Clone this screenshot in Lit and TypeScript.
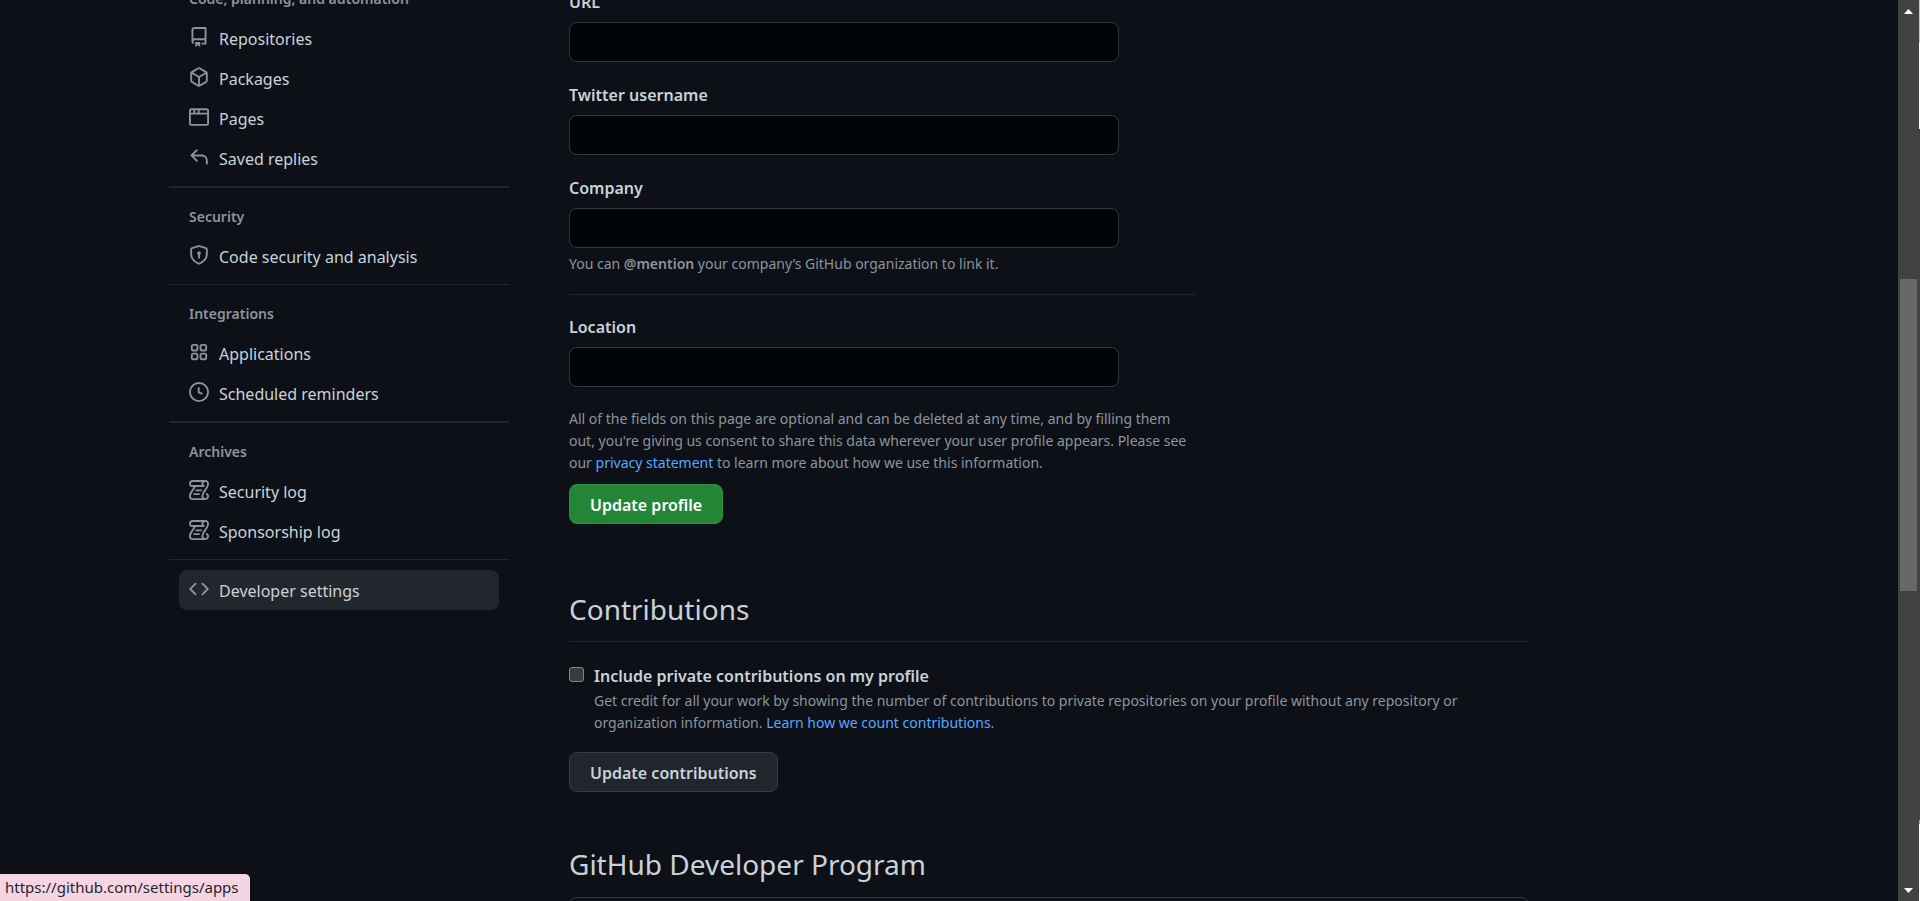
import { LitElement, html, css, svg } from "lit";
import { customElement, property } from "lit/decorators.js";
import { classMap } from "lit/directives/class-map.js";

const ICONS: Record<string, string> = {
  repo: "M2 2.5A2.5 2.5 0 014.5 0h8.75a.75.75 0 01.75.75v12.5a.75.75 0 01-.75.75h-2.5a.75.75 0 110-1.5h1.75v-2h-8a1 1 0 00-.714 1.7.75.75 0 01-1.072 1.05A2.495 2.495 0 012 11.5v-9zm10.5-1V9h-8c-.356 0-.694.074-1 .208V2.5a1 1 0 011-1h8zM5 12.25v3.25a.25.25 0 00.4.2l1.45-1.087a.25.25 0 01.3 0L8.6 15.7a.25.25 0 00.4-.2v-3.25a.25.25 0 00-.25-.25h-3.5a.25.25 0 00-.25.25z",
  package: "M8.878.392a1.75 1.75 0 00-1.756 0l-5.25 3.045A1.75 1.75 0 001 4.951v6.098c0 .624.332 1.2.872 1.514l5.25 3.045a1.75 1.75 0 001.756 0l5.25-3.045c.54-.313.872-.89.872-1.514V4.951c0-.624-.332-1.2-.872-1.514L8.878.392zM7.875 1.69a.25.25 0 01.25 0l4.63 2.685L8 7.133 3.245 4.375l4.63-2.685zM2.5 5.677v5.372c0 .09.047.171.125.216l4.625 2.683V8.432L2.5 5.677zm6.25 8.271l4.625-2.683a.25.25 0 00.125-.216V5.677L8.75 8.432v5.516z",
  browser: "M0 2.75C0 1.784.784 1 1.75 1h12.5c.966 0 1.75.784 1.75 1.75v10.5A1.75 1.75 0 0114.25 15H1.75A1.75 1.75 0 010 13.25V2.75zm1.75-.25a.25.25 0 00-.25.25V4.5h2v-2H1.75zM5 2.5v2h2v-2H5zm3.5 0v2h6V2.75a.25.25 0 00-.25-.25H8.5zM14.5 6h-13v7.25c0 .138.112.25.25.25h12.5a.25.25 0 00.25-.25V6z",
  reply: "M6.78 1.97a.75.75 0 010 1.06L3.81 6h6.44A4.75 4.75 0 0115 10.75v2.5a.75.75 0 01-1.5 0v-2.5a3.25 3.25 0 00-3.25-3.25H3.81l2.97 2.97a.75.75 0 11-1.06 1.06L1.47 7.28a.75.75 0 010-1.06l4.25-4.25a.75.75 0 011.06 0z",
  shield: "M8.533.133a1.75 1.75 0 00-1.066 0l-5.25 1.68A1.75 1.75 0 001 3.48V7c0 1.566.32 3.182 1.303 4.682.983 1.498 2.585 2.813 5.032 3.855a1.7 1.7 0 001.33 0c2.447-1.042 4.049-2.357 5.032-3.855C14.68 10.182 15 8.566 15 7V3.48a1.75 1.75 0 00-1.217-1.667L8.533.133zm-.61 1.429a.25.25 0 01.153 0l5.25 1.68a.25.25 0 01.174.238V7c0 1.358-.275 2.666-1.057 3.86-.784 1.194-2.121 2.34-4.366 3.297a.2.2 0 01-.154 0c-2.245-.956-3.582-2.104-4.366-3.298C2.775 9.666 2.5 8.36 2.5 7V3.48a.25.25 0 01.174-.237l5.25-1.68zM9.5 6.5a1.5 1.5 0 01-.75 1.3v2.45a.75.75 0 01-1.5 0V7.8A1.5 1.5 0 119.5 6.5z",
  apps: "M1.5 3.25c0-.966.784-1.75 1.75-1.75h2.5c.966 0 1.75.784 1.75 1.75v2.5A1.75 1.75 0 015.75 7.5h-2.5A1.75 1.75 0 011.5 5.75v-2.5zM3.25 3a.25.25 0 00-.25.25v2.5c0 .138.112.25.25.25h2.5A.25.25 0 006 5.75v-2.5A.25.25 0 005.75 3h-2.5zM8.5 3.25c0-.966.784-1.75 1.75-1.75h2.5c.966 0 1.75.784 1.75 1.75v2.5a1.75 1.75 0 01-1.75 1.75h-2.5A1.75 1.75 0 018.5 5.75v-2.5zM10.25 3a.25.25 0 00-.25.25v2.5c0 .138.112.25.25.25h2.5a.25.25 0 00.25-.25v-2.5a.25.25 0 00-.25-.25h-2.5zM1.5 10.25c0-.966.784-1.75 1.75-1.75h2.5c.966 0 1.75.784 1.75 1.75v2.5a1.75 1.75 0 01-1.75 1.75h-2.5a1.75 1.75 0 01-1.75-1.75v-2.5zM3.25 10a.25.25 0 00-.25.25v2.5c0 .138.112.25.25.25h2.5a.25.25 0 00.25-.25v-2.5a.25.25 0 00-.25-.25h-2.5zM8.5 10.25c0-.966.784-1.75 1.75-1.75h2.5c.966 0 1.75.784 1.75 1.75v2.5a1.75 1.75 0 01-1.75 1.75h-2.5a1.75 1.75 0 01-1.75-1.75v-2.5zM10.25 10a.25.25 0 00-.25.25v2.5c0 .138.112.25.25.25h2.5a.25.25 0 00.25-.25v-2.5a.25.25 0 00-.25-.25h-2.5z",
  clock: "M1.5 8a6.5 6.5 0 1113 0 6.5 6.5 0 01-13 0zM8 0a8 8 0 100 16A8 8 0 008 0zm.5 4.75a.75.75 0 00-1.5 0v3.5a.75.75 0 00.471.696l2.5 1a.75.75 0 00.557-1.392L8.5 7.742V4.75z",
  log: "M5 8.25a.75.75 0 01.75-.75h4a.75.75 0 010 1.5h-4A.75.75 0 015 8.25zM4 10.5A.75.75 0 004 12h4a.75.75 0 000-1.5H4zM13 0c1.654 0 3 1.328 3 3 0 .982-.338 1.933-.783 2.818-.443.879-1.028 1.758-1.582 2.588l-.011.017c-.568.853-1.104 1.659-1.501 2.446-.398.789-.623 1.494-.623 2.136a1.5 1.5 0 102.333-1.248.75.75 0 01.834-1.246A3 3 0 0113 16H3a3 3 0 01-3-3c0-1.582.891-3.135 1.777-4.506.209-.322.418-.637.623-.946.473-.709.923-1.386 1.287-2.048H2.51c-.576 0-1.381-.133-1.907-.783A2.68 2.68 0 010 3a3 3 0 013-3h10zm0 1.5A1.5 1.5 0 0011.5 3c0 .476.223.834.667 1.132A.75.75 0 0111.75 5.5H5.368c-.467 1.003-1.141 2.015-1.773 2.963-.192.289-.381.571-.558.845C2.13 10.711 1.5 11.916 1.5 13A1.5 1.5 0 003 14.5h7.401A2.989 2.989 0 0110 13c0-.979.338-1.928.784-2.812.441-.874 1.023-1.748 1.575-2.576l.017-.026c.568-.853 1.103-1.658 1.501-2.448.398-.79.623-1.497.623-2.143 0-.838-.669-1.5-1.5-1.5zM3 1.5A1.5 1.5 0 001.5 3c0 .321.1.569.27.778.097.12.325.227.74.227h7.674A2.737 2.737 0 0110 3c0-.546.146-1.059.401-1.5H3z",
  code: "M4.72 3.22a.75.75 0 011.06 1.06L2.06 8l3.72 3.72a.75.75 0 11-1.06 1.06L.47 8.53a.75.75 0 010-1.06l4.25-4.25zm6.56 0a.75.75 0 10-1.06 1.06L13.94 8l-3.72 3.72a.75.75 0 101.06 1.06l4.25-4.25a.75.75 0 000-1.06l-4.25-4.25z",
};

interface NavItem {
  icon: string;
  label: string;
  current?: boolean;
}

interface NavGroup {
  title?: string;
  rule: "none" | "thin" | "thick";
  items: NavItem[];
}

const GROUPS: NavGroup[] = [
  {
    title: "Code, planning, and automation",
    rule: "none",
    items: [
      { icon: "repo", label: "Repositories" },
      { icon: "package", label: "Packages" },
      { icon: "browser", label: "Pages" },
      { icon: "reply", label: "Saved replies" },
    ],
  },
  { title: "Security", rule: "thick", items: [{ icon: "shield", label: "Code security and analysis" }] },
  {
    title: "Integrations",
    rule: "thin",
    items: [
      { icon: "apps", label: "Applications" },
      { icon: "clock", label: "Scheduled reminders" },
    ],
  },
  {
    title: "Archives",
    rule: "thick",
    items: [
      { icon: "log", label: "Security log" },
      { icon: "log", label: "Sponsorship log" },
    ],
  },
  { rule: "thin", items: [{ icon: "code", label: "Developer settings", current: true }] },
];

@customElement("settings-nav")
export class SettingsNav extends LitElement {
  static styles = css`
    :host {
      display: block;
    }
    .group {
      padding: 8px 10px;
    }
    .first {
      padding-top: 0;
    }
    .thin {
      border-top: 1px solid #21262d;
    }
    .thick {
      border-top: 2px solid #21262d;
    }
    .untitled {
      padding-top: 10px;
    }
    .title {
      margin: 0;
      padding: 2px 10px 0;
      font-size: 14px;
      font-weight: 600;
      line-height: 38px;
      color: #8b949e;
    }
    .list {
      margin: 0;
      padding: 0;
      list-style: none;
    }
    .item {
      display: flex;
      align-items: center;
      gap: 10px;
      height: 40px;
      padding: 0 10px;
      border-radius: 8px;
      font-size: 16px;
      line-height: 26px;
      color: #c9d1d9;
      text-decoration: none;
    }
    .text {
      padding-top: 2px;
    }
    .current {
      background: #22272e;
    }
    .icon {
      flex: none;
      width: 20px;
      height: 20px;
      margin-bottom: 2px;
      fill: #8b949e;
    }
  `;

  render() {
    return html`<nav aria-label="Settings">
      ${GROUPS.map(
        (g) => html`<section
          class=${classMap({
            group: true,
            first: g.rule === "none",
            thin: g.rule === "thin",
            thick: g.rule === "thick",
            untitled: !g.title,
          })}
        >
          ${g.title ? html`<h3 class="title">${g.title}</h3>` : null}
          <ul class="list">
            ${g.items.map(
              (i) => html`<li>
                <a class=${classMap({ item: true, current: !!i.current })} href="#">
                  <svg class="icon" viewBox="0 0 16 16" aria-hidden="true">
                    ${svg`<path fill-rule="evenodd" d=${ICONS[i.icon]}></path>`}
                  </svg>
                  <span class="text">${i.label}</span>
                </a>
              </li>`
            )}
          </ul>
        </section>`
      )}
    </nav>`;
  }
}

@customElement("text-field")
export class TextField extends LitElement {
  @property() label = "";

  static styles = css`
    :host {
      display: block;
    }
    .label {
      display: block;
      margin-bottom: 7px;
      font-size: 16px;
      font-weight: 600;
      line-height: 26px;
      color: #c9d1d9;
    }
    .input {
      display: block;
      box-sizing: border-box;
      width: 100%;
      max-width: 550px;
      height: 40px;
      padding: 0 14px;
      border: 1px solid #30363d;
      border-radius: 8px;
      background: #010409;
      color: #c9d1d9;
      font: inherit;
      font-size: 16px;
      outline: none;
    }
  `;

  render() {
    return html`<label class="label" for="field">${this.label}</label>
      <input class="input" id="field" type="text" />`;
  }
}

@customElement("page-scrollbar")
export class PageScrollbar extends LitElement {
  static styles = css`
    :host {
      display: flex;
      width: 22px;
      background: #424242;
    }
    .track {
      flex: 1;
      display: grid;
      grid-template-rows: 279fr 312fr 310fr;
      padding: 0 2px;
    }
    .thumb {
      background: #686868;
    }
    .cap {
      display: flex;
      justify-content: center;
      padding: 9px 0 8px;
    }
    .down {
      align-items: flex-end;
    }
    .arrow {
      width: 9px;
      height: 5px;
      fill: #fff;
    }
    .edge {
      width: 1px;
      background: linear-gradient(#d9bcc6 0 43px, #fff 43px 129px, #424242 129px calc(100% - 81px), #8bc34a calc(100% - 81px) calc(100% - 77px), #fff calc(100% - 77px));
    }
  `;

  render() {
    return html`<div class="track">
        <div class="cap"><svg class="arrow" viewBox="0 0 9 5"><path d="M0 5L4.500 0L9 5z"></path></svg></div>
        <div class="thumb"></div>
        <div class="cap down"><svg class="arrow" viewBox="0 0 9 5"><path d="M0 0L4.500 5L9 0z"></path></svg></div>
      </div>
      <div class="edge"></div>`;
  }
}

@customElement("app-root")
export class AppRoot extends LitElement {
  static styles = css`
    :host {
      display: flex;
      position: relative;
      height: 100vh;
      overflow: hidden;
      background: #0d1117;
      color: #c9d1d9;
      font-family: "Noto Sans", "Open Sans", sans-serif;
      font-size: 16px;
    }
    .viewport {
      flex: 1;
      min-width: 0;
      overflow: hidden;
    }
    .page {
      display: grid;
      grid-template-columns: 340px minmax(0, 960px);
      gap: 60px;
      box-sizing: border-box;
      max-width: 1600px;
      margin: -22px auto 0;
      padding: 0 20px;
    }
    .main {
      padding-top: 11px;
    }
    .profile {
      max-width: 626px;
    }
    .fields {
      display: grid;
      gap: 20px;
    }
    .muted {
      margin: 0;
      font-size: 14px;
      line-height: 22px;
      color: #8b949e;
    }
    .hint {
      margin-top: 5px;
    }
    .strong {
      font-weight: 600;
    }
    .rule {
      height: 1px;
      margin: 19px 0;
      border: 0;
      background: #21262d;
    }
    .consent {
      margin: 21px 0 10px;
    }
    .link {
      color: #58a6ff;
      text-decoration: none;
    }
    .button {
      display: block;
      height: 40px;
      padding: 2px 20px 0;
      border: 1px solid #363b42;
      border-radius: 8px;
      background: #21262d;
      color: #c9d1d9;
      font: inherit;
      font-size: 16px;
      font-weight: 600;
    }
    .primary {
      border-color: #2f8f41;
      background: #238636;
      color: #fff;
    }
    .heading {
      margin: 0;
      font-size: 28px;
      font-weight: 400;
      line-height: 42px;
    }
    .contributions {
      margin-top: 64px;
    }
    .ruled {
      padding-bottom: 11px;
      border-bottom: 1px solid #21262d;
    }
    .option {
      display: grid;
      grid-template-columns: 15px minmax(0, 1fr);
      gap: 1px 10px;
      margin: 21px 0 18px;
    }
    .check {
      appearance: none;
      width: 15px;
      height: 15px;
      margin: 4px 0 0;
      border: 1px solid #858585;
      border-radius: 3px;
      background: #3b3b3b;
    }
    .option-label {
      font-weight: 600;
      line-height: 26px;
    }
    .option-text {
      grid-column: 2;
      max-width: 900px;
    }
    .program {
      margin-top: 51px;
    }
    .card {
      height: 120px;
      margin-top: 12px;
      border: 1px solid #30363d;
      border-radius: 8px;
    }
    .status {
      position: absolute;
      left: 0;
      bottom: 0;
      padding: 0 11px 0 5px;
      border-top-right-radius: 5px;
      background: #f6d5e3;
      color: #24262d;
      font-size: 15px;
      line-height: 27px;
    }
  `;

  render() {
    return html`
      <div class="viewport">
        <div class="page">
          <settings-nav></settings-nav>
          <main class="main">
            <section class="profile">
              <div class="fields">
                <text-field label="URL"></text-field>
                <text-field label="Twitter username"></text-field>
                <text-field label="Company"></text-field>
              </div>
              <p class="muted hint">
                You can <span class="strong">@mention</span> your company’s GitHub organization to link it.
              </p>
              <hr class="rule" />
              <text-field label="Location"></text-field>
              <p class="muted consent">
                All of the fields on this page are optional and can be deleted at any time, and by filling them out,
                you're giving us consent to share this data wherever your user profile appears. Please see our
                <a class="link" href="#">privacy statement</a> to learn more about how we use this information.
              </p>
              <button class="button primary" type="button">Update profile</button>
            </section>
            <section class="contributions">
              <h2 class="heading ruled">Contributions</h2>
              <div class="option">
                <input class="check" id="private" type="checkbox" />
                <label class="option-label" for="private">Include private contributions on my profile</label>
                <p class="muted option-text">
                  Get credit for all your work by showing the number of contributions to private repositories on your
                  profile without any repository or organization information.
                  <a class="link" href="#">Learn how we count contributions</a>.
                </p>
              </div>
              <button class="button" type="button">Update contributions</button>
            </section>
            <section class="program">
              <h2 class="heading">GitHub Developer Program</h2>
              <div class="card"></div>
            </section>
          </main>
        </div>
      </div>
      <page-scrollbar></page-scrollbar>
      <div class="status">https://github.com/settings/apps</div>
    `;
  }
}
